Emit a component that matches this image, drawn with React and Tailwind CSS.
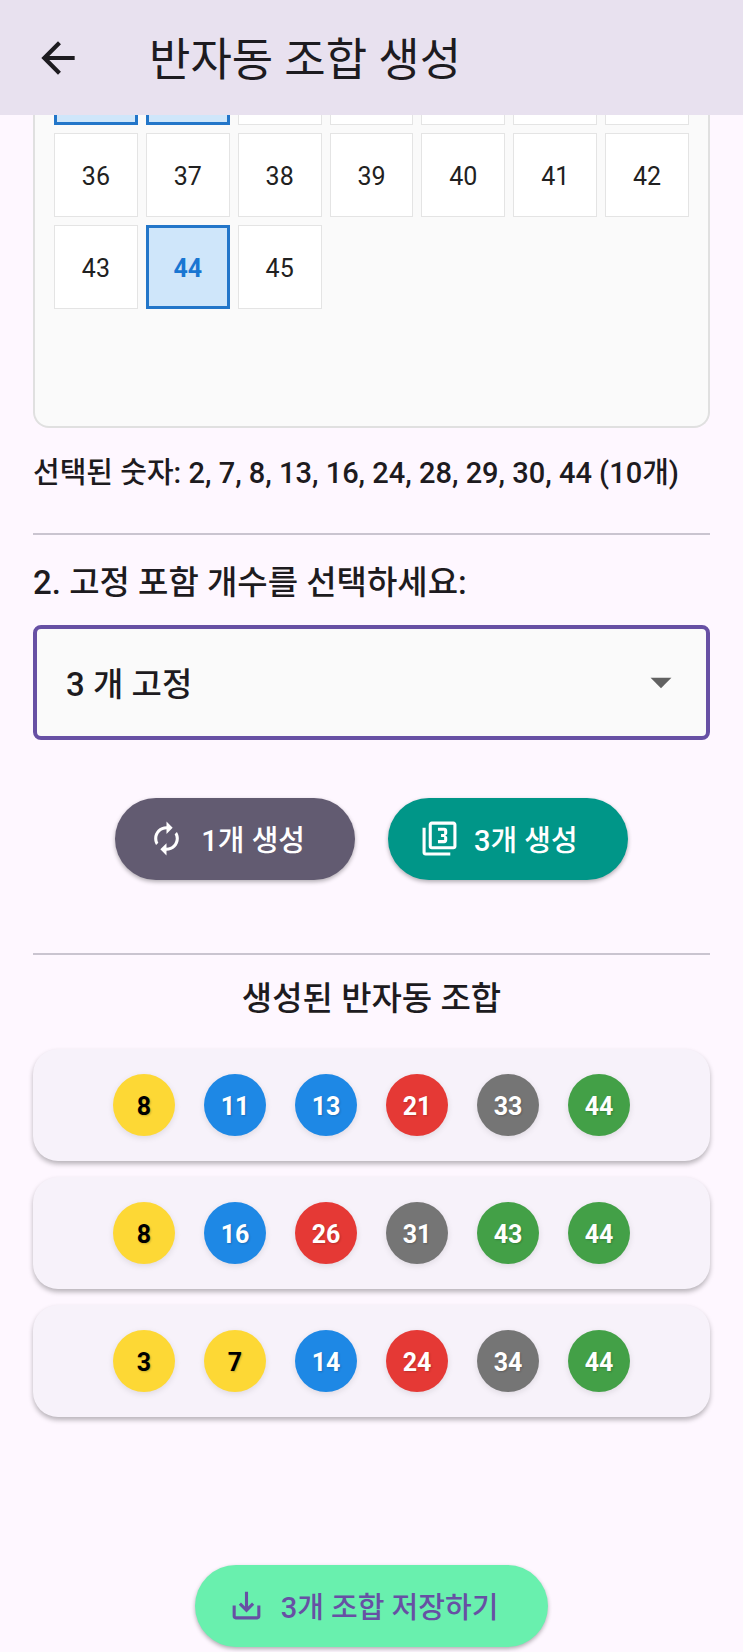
import React, { useState } from 'react';
import { MdArrowBack, MdAutorenew, MdOutlineFilter3, MdSaveAlt, MdArrowDropDown } from 'react-icons/md';
import clsx from 'clsx';

const selected = [2, 7, 8, 13, 16, 24, 28, 29, 30, 44];

const combinations = [
  [8, 11, 13, 21, 33, 44],
  [8, 16, 26, 31, 43, 44],
  [3, 7, 14, 24, 34, 44],
];

const range = (from, to) => Array.from({ length: to - from + 1 }, (_, i) => from + i);

// Lotto ball colors by number band
const ballColor = (n) => {
  if (n <= 10) return 'bg-[#fdd835] text-black';
  if (n <= 20) return 'bg-[#1e88e5] text-white';
  if (n <= 30) return 'bg-[#e53935] text-white';
  if (n <= 40) return 'bg-[#757575] text-white';
  return 'bg-[#43a047] text-white';
};

const NumberCell = ({ value }) => {
  const active = selected.includes(value);
  return (
    <button
      type="button"
      aria-pressed={active}
      className={clsx(
        'flex aspect-square items-center justify-center pt-1 text-[25px] leading-[30px]',
        active
          ? 'border-3 border-[#2376c9] bg-[#cfe6fa] font-bold text-[#1976d2]'
          : 'border border-[#e4e4e4] bg-white text-[#212121]'
      )}
    >
      {value}
    </button>
  );
};

// Bottom edge of the row that is scrolled under the app bar
const ScrolledCell = ({ value }) => (
  <button
    type="button"
    aria-label={String(value)}
    className={clsx(
      'h-[10px]',
      selected.includes(value) ? 'border-3 border-t-0 border-[#2376c9] bg-[#cfe6fa]' : 'border border-t-0 border-[#e4e4e4] bg-white'
    )}
  />
);

const PillButton = ({ icon: Icon, className, children }) => (
  <button
    type="button"
    className={clsx(
      'flex h-[82px] items-center gap-4 rounded-full pr-[50px] pl-[33px] text-[29px] leading-[42px] font-medium whitespace-nowrap shadow-[0_2px_4px_rgba(0,0,0,0.3)]',
      className
    )}
  >
    <Icon className="size-[37px] shrink-0" />
    <span className="pt-1">{children}</span>
  </button>
);

const Combination = ({ numbers }) => (
  <li className="flex justify-center gap-[29px] rounded-[25px] bg-[#f7f2fa] py-[25px] shadow-[0_3px_5px_rgba(0,0,0,0.28)]">
    {numbers.map((n) => (
      <span
        key={n}
        className={clsx(
          'flex size-[62px] items-center justify-center rounded-full pt-1 text-[25px] leading-[30px] font-bold shadow-[0_2px_6px_rgba(0,0,0,0.1)] text-shadow-[1px_1px_2px_rgba(0,0,0,0.2)]',
          ballColor(n)
        )}
      >
        {n}
      </span>
    ))}
  </li>
);

export default function App() {
  const [fixedCount, setFixedCount] = useState('3');

  return (
    <div className="min-h-screen bg-[#fef7ff] font-['Roboto','Noto_Sans_CJK_KR',sans-serif] text-[#1d1b20]">
      <header className="flex h-[115px] items-center bg-[#e8e1ef] px-[33px]">
        <button type="button" aria-label="뒤로">
          <MdArrowBack className="size-[50px]" />
        </button>
        <h1 className="ml-[66px] pt-1.5 text-[45px] leading-[60px]">반자동 조합 생성</h1>
      </header>

      <main className="flex flex-col px-[33px] pb-1">
        <section className="rounded-b-2xl border-2 border-t-0 border-[#e0e0e0] bg-[#fafafa] px-[19px] pb-[117px]">
          <div className="mb-2 grid grid-cols-7 gap-2">
            {range(29, 35).map((n) => (
              <ScrolledCell key={n} value={n} />
            ))}
          </div>
          <div className="grid grid-cols-7 gap-2">
            {range(36, 45).map((n) => (
              <NumberCell key={n} value={n} />
            ))}
          </div>
        </section>

        <p className="mt-6 text-[29px] leading-[42px] font-medium">
          선택된 숫자: {selected.join(', ')} ({selected.length}개)
        </p>

        <hr className="mt-[39px] border-t-2 border-[#cac4d0]" />

        <label htmlFor="fixed-count" className="mt-6 text-[33px] leading-[48px] font-medium">
          2. 고정 포함 개수를 선택하세요:
        </label>
        <div className="relative mt-[18px]">
          <select
            id="fixed-count"
            value={fixedCount}
            onChange={(e) => setFixedCount(e.target.value)}
            className="h-[115px] w-full appearance-none rounded-lg border-4 border-[#6750a4] bg-[#fafafa] px-[29px] pt-1.5 text-[33px] leading-[48px] font-medium outline-none"
          >
            <option value="1">1 개 고정</option>
            <option value="2">2 개 고정</option>
            <option value="3">3 개 고정</option>
            <option value="4">4 개 고정</option>
          </select>
          <MdArrowDropDown className="pointer-events-none absolute inset-y-0 right-6 my-auto size-[50px] text-[#616161]" />
        </div>

        <div className="mt-[58px] flex justify-center gap-[33px]">
          <PillButton icon={MdAutorenew} className="bg-[#625b71] text-white">
            1개 생성
          </PillButton>
          <PillButton icon={MdOutlineFilter3} className="bg-[#009688] text-white">
            3개 생성
          </PillButton>
        </div>

        <hr className="mt-[73px] border-t-2 border-[#cac4d0]" />

        <h2 className="mt-5 text-center text-[33px] leading-[48px] font-medium">생성된 반자동 조합</h2>
        <ul className="mt-[26px] flex flex-col gap-4">
          {combinations.map((numbers) => (
            <Combination key={numbers.join('-')} numbers={numbers} />
          ))}
        </ul>

        <div className="mt-[148px] flex justify-center">
          <PillButton icon={MdSaveAlt} className="bg-[#69f0ae] text-[#6750a4]">
            {combinations.length}개 조합 저장하기
          </PillButton>
        </div>
      </main>
    </div>
  );
}
